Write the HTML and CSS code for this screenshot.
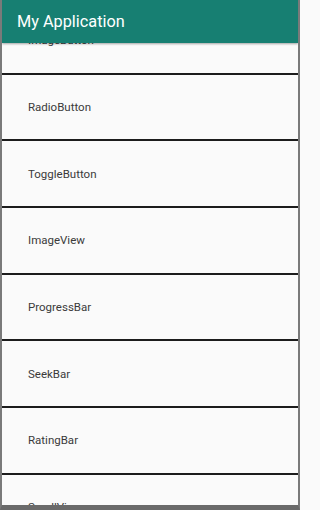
FILE: index.html
```html
<!DOCTYPE html>
<html>
<head>
<meta charset="utf-8">
<link rel="stylesheet" href="styles.css">
</head>
<body>
<div class="frame">
  <header class="appbar">My Application</header>
  <div class="viewport">
    <ul class="list">
      <li class="row">ImageButton</li>
      <li class="row">RadioButton</li>
      <li class="row">ToggleButton</li>
      <li class="row">ImageView</li>
      <li class="row">ProgressBar</li>
      <li class="row">SeekBar</li>
      <li class="row">RatingBar</li>
      <li class="row">ScrollView</li>
    </ul>
  </div>
</div>
</body>
</html>
```
FILE: styles.css
```css
html, body {
  margin: 0;
  padding: 0;
  background: #fafafa;
}
.frame {
  width: 300px;
  height: 510px;
  box-sizing: border-box;
  border-left: 2px solid #7a7a7a;
  border-right: 2px solid #7a7a7a;
  border-bottom: 5px solid #6a6a6a;
  display: flex;
  flex-direction: column;
  overflow: hidden;
  background: #fafafa;
  font-family: Roboto, "Liberation Sans", sans-serif;
}
.appbar {
  position: relative;
  z-index: 1;
  flex: 0 0 43px;
  height: 43px;
  box-sizing: border-box;
  background: #177f72;
  color: #ffffff;
  font-size: 16.3px;
  line-height: 43px;
  padding-left: 15px;
  box-shadow: 0 1px 2px rgba(0,0,0,0.35);
}
.viewport {
  flex: 1 1 auto;
  overflow: hidden;
}
.list {
  list-style: none;
  margin: -35px 0 0 0;
  padding: 0;
}
.row {
  height: 64.67px;
  border-bottom: 2px solid #1c1c1c;
  display: flex;
  align-items: center;
  padding-left: 26px;
  font-size: 11.5px;
  color: #3a3a3a;
}
```
